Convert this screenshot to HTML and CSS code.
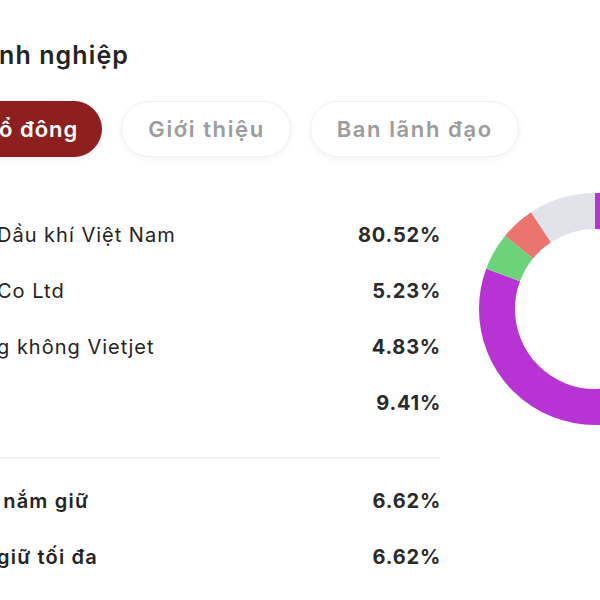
FILE: index.html
```html
<!DOCTYPE html>
<html lang="vi">
<head>
<meta charset="utf-8">
<title>Thông tin doanh nghiệp</title>
<link rel="stylesheet" href="styles.css">
</head>
<body>
<div class="page">
  <h1 class="title">nh nghiệp</h1>
  <div class="tabs">
    <div class="tab active">ổ đông</div>
    <div class="tab">Giới thiệu</div>
    <div class="tab">Ban lãnh đạo</div>
  </div>
  <div class="content">
    <div class="list">
      <div class="row"><span class="label">Dầu khí Việt Nam</span><span class="value">80.52%</span></div>
      <div class="row"><span class="label">Co Ltd</span><span class="value">5.23%</span></div>
      <div class="row"><span class="label">g không Vietjet</span><span class="value">4.83%</span></div>
      <div class="row"><span class="label"></span><span class="value">9.41%</span></div>
      <div class="divider"></div>
      <div class="row strong"><span class="label">&nbsp;nắm giữ</span><span class="value">6.62%</span></div>
      <div class="row strong"><span class="label">giữ tối đa</span><span class="value">6.62%</span></div>
    </div>
    <svg class="donut" width="232" height="232" viewBox="0 0 232 232">
      <g transform="rotate(-90 116 116)" fill="none" stroke-width="36">
        <circle cx="116" cy="116" r="98" stroke="#b733d4" stroke-dasharray="495.8 615.75" stroke-dashoffset="0"/>
        <circle cx="116" cy="116" r="98" stroke="#6dd37b" stroke-dasharray="32.2 615.75" stroke-dashoffset="-495.8"/>
        <circle cx="116" cy="116" r="98" stroke="#ea756e" stroke-dasharray="29.74 615.75" stroke-dashoffset="-528"/>
        <circle cx="116" cy="116" r="98" stroke="#e2e2ea" stroke-dasharray="57.94 615.75" stroke-dashoffset="-557.74"/>
      </g>
    </svg>
  </div>
</div>
</body>
</html>
```
FILE: styles.css
```css
html, body {
  margin: 0;
  padding: 0;
  background: #ffffff;
  overflow: hidden;
}
body {
  font-family: Inter, "Noto Sans", "Liberation Sans", sans-serif;
  color: #222222;
  width: 600px;
  height: 600px;
}
.page {
  display: flex;
  flex-direction: column;
  padding-top: 39px;
}
.title {
  margin: 0 0 0 -1px;
  font-size: 25px;
  line-height: 32px;
  font-weight: 600;
  letter-spacing: 1.1px;
  color: #242424;
}
.tabs {
  display: flex;
  gap: 19px;
  margin-top: 30px;
}
.tab {
  height: 56px;
  box-sizing: border-box;
  display: flex;
  align-items: center;
  padding: 0 25px 0 26px;
  border-radius: 28px;
  border: 1px solid #efefef;
  box-shadow: 0 2px 6px rgba(0, 0, 0, 0.05);
  font-size: 22px;
  font-weight: 600;
  letter-spacing: 1.6px;
  color: #9c9c9c;
  white-space: nowrap;
}
.tab.active {
  background: #8e1f1f;
  border-color: #8e1f1f;
  color: #ffffff;
  margin-left: -30px;
  padding-left: 28px;
  padding-right: 23px;
  letter-spacing: 1px;
}
.content {
  display: flex;
  align-items: flex-start;
  margin-top: 36px;
}
.list {
  width: 443px;
  margin-left: -3px;
  padding-top: 14px;
  flex: none;
}
.row {
  height: 56px;
  display: flex;
  align-items: center;
  justify-content: space-between;
  font-size: 20px;
}
.label {
  font-weight: 400;
  color: #232323;
  letter-spacing: 1px;
  white-space: nowrap;
}
.value {
  font-weight: 700;
  color: #2a2a2a;
  letter-spacing: 0.8px;
  margin-right: -1px;
}
.row.strong .label {
  font-weight: 600;
  letter-spacing: 1.2px;
}
.divider {
  height: 2px;
  background: #f3f3f3;
  margin: 26px 0 14px 0;
}
.donut {
  flex: none;
  margin-left: 39px;
}
```
